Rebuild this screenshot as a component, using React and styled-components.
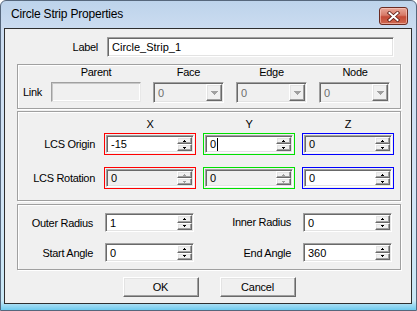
import React from 'react';
import styled, { createGlobalStyle } from 'styled-components';

const Global = createGlobalStyle`
  html, body { margin: 0; padding: 0; background: #ffffff; }
  body { font-family: "Liberation Sans", Arial, sans-serif; font-size: 11px; color: #000; }
  * { box-sizing: border-box; }
`;

const Window = styled.div`
  width: 417px;
  height: 311px;
  border: 1px solid #56677c;
  border-radius: 6px 6px 0 0;
  background: linear-gradient(#bdd3eb 0px, #cbdcf0 27px, #d3e4f5 60%, #c9e8f6 97%, #6fcbef 100%);
  padding: 0 4px 6px 3px;
  display: flex;
  flex-direction: column;
`;

const TitleBar = styled.div`
  height: 27px;
  display: flex;
  justify-content: space-between;
  align-items: flex-start;
  padding: 0 4px 0 7px;
`;

const Title = styled.div`
  font-size: 12px;
  letter-spacing: -0.2px;
  line-height: 27px;
  color: #000;
`;

const CloseButton = styled.div`
  margin-top: 6px;
  width: 29px;
  height: 18px;
  border: 1px solid #6b2b22;
  border-radius: 3px;
  background: linear-gradient(#e9a89a 0%, #d77a68 45%, #c44a36 55%, #cf6a52 100%);
  box-shadow: inset 0 0 0 1px rgba(255, 210, 200, 0.55);
  display: flex;
  align-items: center;
  justify-content: center;
`;

const Client = styled.div`
  flex: 1;
  border: 1px solid #2e2e2e;
  background: #f0f0f0;
  padding: 8px 10px 0 12px;
  display: flex;
  flex-direction: column;
  align-items: flex-start;
`;

const LabelRow = styled.div`
  display: flex;
  align-items: center;
  height: 20px;
`;

const RowLabel = styled.div`
  width: ${p => p.$w}px;
  text-align: right;
  margin-right: ${p => p.$gap || 0}px;
  letter-spacing: -0.3px;
`;

const Group = styled.div`
  width: 384px;
  margin-top: ${p => p.$mt}px;
  border: 1px solid #a0a0a0;
  box-shadow: inset 1px 1px 0 #ffffff, 1px 1px 0 #ffffff;
  display: grid;
  grid-template-columns: ${p => p.$cols};
  grid-template-rows: ${p => p.$rows};
  column-gap: ${p => p.$cgap}px;
  padding: ${p => p.$pad};
  align-items: start;
`;

const Header = styled.div`
  text-align: center;
  line-height: 13px;
  letter-spacing: -0.3px;
`;

const CellLabel = styled.div`
  height: ${p => p.$h}px;
  display: flex;
  align-items: center;
  justify-content: ${p => (p.$left ? 'flex-start' : 'flex-end')};
  padding-right: ${p => (p.$left ? 0 : 2)}px;
  letter-spacing: -0.3px;
  white-space: nowrap;
`;

const Sunken = styled.div`
  width: ${p => p.$w}px;
  height: ${p => p.$h}px;
  border: 1px solid;
  border-color: ${p => (p.$soft ? '#a0a0a0 #e8e8e8 #e8e8e8 #a0a0a0' : '#a0a0a0 #ffffff #ffffff #a0a0a0')};
  box-shadow: ${p =>
    p.$soft ? 'inset 1px 1px 0 #c8c8c8, inset -1px -1px 0 #ffffff' : 'inset 1px 1px 0 #696969, inset -1px -1px 0 #e3e3e3'};
  background: ${p => p.$bg};
  padding: ${p => (p.$pad ? p.$pad : '1px')};
  display: flex;
  align-items: stretch;
`;

const FieldText = styled.div`
  flex: 1;
  display: flex;
  align-items: center;
  padding-left: 3px;
  color: ${p => p.$color || '#000'};
  overflow: hidden;
`;

const Caret = styled.span`
  display: inline-block;
  width: 1px;
  height: 13px;
  background: #000;
  margin-left: 1px;
`;

const SpinColumn = styled.div`
  width: 15px;
  display: flex;
  flex-direction: column;
`;

const Raised = styled.div`
  flex: 1;
  width: ${p => (p.$w ? `${p.$w}px` : 'auto')};
  flex: ${p => (p.$w ? 'none' : 1)};
  border: 1px solid;
  border-color: #ffffff #696969 #696969 #ffffff;
  box-shadow: inset -1px -1px 0 #a0a0a0, inset 1px 1px 0 #e3e3e3;
  background: #f0f0f0;
  display: flex;
  align-items: center;
  justify-content: center;
`;

const Accent = styled.div`
  width: ${p => p.$w}px;
  height: ${p => p.$h}px;
  border: 1px solid ${p => p.$color};
  padding: 1px;
  background: #f0f0f0;
`;

const ButtonRow = styled.div`
  align-self: stretch;
  margin-top: 7px;
  display: flex;
  justify-content: center;
  gap: 21px;
`;

const PushButton = styled.div`
  width: 76px;
  height: 20px;
  border: 1px solid;
  border-color: #ffffff #696969 #696969 #ffffff;
  box-shadow: inset -1px -1px 0 #a0a0a0, inset 1px 1px 0 #e3e3e3;
  background: #f0f0f0;
  display: flex;
  align-items: center;
  justify-content: center;
  letter-spacing: -0.2px;
`;

// Pixel triangle: rows listed top to bottom
const Tri = ({ up, color, size = 'small' }) => {
  const base = size === 'small' ? [1, 3] : [1, 3, 5, 7];
  const rows = up ? base : base.slice().reverse();
  const w = Math.max(...rows);
  return (
    <svg width={w} height={rows.length} viewBox={`0 0 ${w} ${rows.length}`} style={{ display: 'block' }}>
      {rows.map((n, i) => (
        <rect key={i} x={(w - n) / 2} y={i} width={n} height={1} fill={color} />
      ))}
    </svg>
  );
};

const CloseGlyph = () => (
  <svg width="13" height="11" viewBox="0 0 13 11" style={{ display: 'block' }}>
    <path d="M2.5 2 L10.5 9 M10.5 2 L2.5 9" stroke="#5a1a12" strokeWidth="3.6" strokeLinecap="square" />
    <path d="M2.5 2 L10.5 9 M10.5 2 L2.5 9" stroke="#ffffff" strokeWidth="2" strokeLinecap="square" />
  </svg>
);

const Spin = ({ w, h, value, bg = '#fff', arrowsDisabled = false, caret = false }) => (
  <Sunken $w={w} $h={h} $bg={bg}>
    <FieldText>
      {value}
      {caret && <Caret />}
    </FieldText>
    <SpinColumn>
      <Raised>
        <Tri up color={arrowsDisabled ? '#a0a0a0' : '#000'} />
      </Raised>
      <Raised>
        <Tri color={arrowsDisabled ? '#a0a0a0' : '#000'} />
      </Raised>
    </SpinColumn>
  </Sunken>
);

const AccentSpin = ({ color, ...rest }) => (
  <Accent $w={92} $h={22} $color={color}>
    <Spin w={88} h={18} {...rest} />
  </Accent>
);

const Combo = ({ value }) => (
  <Sunken $w={71} $h={21} $bg="#f0f0f0" $pad="1px 1px 1px 1px">
    <FieldText $color="#6d6d6d">{value}</FieldText>
    <Raised $w={16}>
      <Tri color="#a0a0a0" size="big" />
    </Raised>
  </Sunken>
);

export default function App() {
  return (
    <>
      <Global />
      <Window>
        <TitleBar>
          <Title>Circle Strip Properties</Title>
          <CloseButton>
            <CloseGlyph />
          </CloseButton>
        </TitleBar>
        <Client>
          <LabelRow>
            <RowLabel $w={81} $gap={9}>Label</RowLabel>
            <Sunken $w={287} $h={20} $bg="#fff">
              <FieldText>Circle_Strip_1</FieldText>
            </Sunken>
          </LabelRow>

          <Group $mt={7} $cols="16px 90px 71px 71px 72px" $rows="16px 21px" $cgap={12} $pad="1px 0 5px 5px">
            <div />
            <Header>Parent</Header>
            <Header>Face</Header>
            <Header>Edge</Header>
            <Header>Node</Header>
            <CellLabel $h={20} $left>Link</CellLabel>
            <Sunken $w={90} $h={20} $bg="#f0f0f0" $soft />
            <Combo value="0" />
            <Combo value="0" />
            <Combo value="0" />
          </Group>

          <Group $mt={2} $cols="78px 92px 92px 92px" $rows="15px 34px 22px" $cgap={7} $pad="6px 0 11px 1px">
            <div />
            <Header>X</Header>
            <Header>Y</Header>
            <Header>Z</Header>
            <CellLabel $h={22}>LCS Origin</CellLabel>
            <AccentSpin color="#ff0000" value="-15" />
            <AccentSpin color="#00e000" value="0" caret />
            <AccentSpin color="#0000ff" value="0" bg="#f0f0f0" />
            <CellLabel $h={22}>LCS Rotation</CellLabel>
            <AccentSpin color="#ff0000" value="0" bg="#f0f0f0" arrowsDisabled />
            <AccentSpin color="#00e000" value="0" bg="#f0f0f0" arrowsDisabled />
            <AccentSpin color="#0000ff" value="0" />
          </Group>

          <Group $mt={3} $cols="77px 89px 89px 89px" $rows="30px 19px" $cgap={10} $pad="8px 0 7px 0">
            <CellLabel $h={19}>Outer Radius</CellLabel>
            <Spin w={89} h={19} value="1" />
            <CellLabel $h={17}>Inner Radius</CellLabel>
            <Spin w={89} h={19} value="0" />
            <CellLabel $h={19}>Start Angle</CellLabel>
            <Spin w={89} h={19} value="0" />
            <CellLabel $h={19}>End Angle</CellLabel>
            <Spin w={89} h={19} value="360" />
          </Group>

          <ButtonRow>
            <PushButton>OK</PushButton>
            <PushButton>Cancel</PushButton>
          </ButtonRow>
        </Client>
      </Window>
    </>
  );
}
